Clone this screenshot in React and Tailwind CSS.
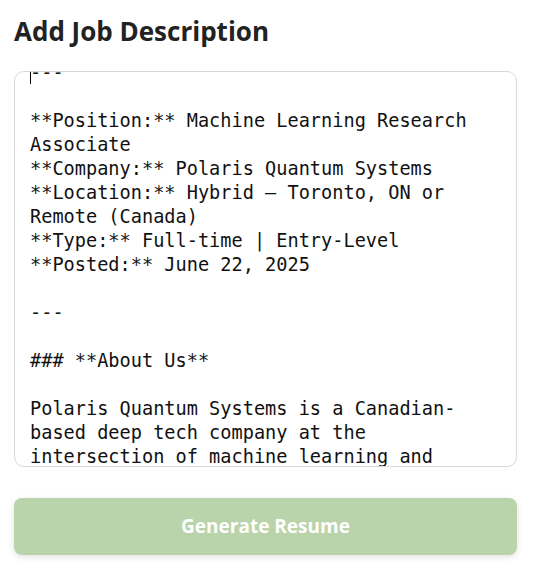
import React from "react";

const jobText = `---

**Position:** Machine Learning Research Associate
**Company:** Polaris Quantum Systems
**Location:** Hybrid – Toronto, ON or Remote (Canada)
**Type:** Full-time | Entry-Level
**Posted:** June 22, 2025

---

### **About Us**

Polaris Quantum Systems is a Canadian-based deep tech company at the intersection of machine learning and quantum computing.`;

export default function App() {
  return (
    <div className="w-[533px] h-[573px] bg-white pl-[14px] pr-[16px] pt-[14px] font-['Open_Sans',sans-serif]">
      <h2 className="text-[26px] leading-[34px] font-bold text-[#222]">Add Job Description</h2>

      {/* textarea look-alike, scrolled a little past the top */}
      <div className="mt-[23px] h-[396px] rounded-[10px] border border-[#d9d9d9] overflow-hidden px-[15px]">
        <div className="relative -mt-[11px] whitespace-pre-wrap break-words font-['DejaVu_Sans_Mono',monospace] text-[18.6px] leading-[24px] text-[#111]">
          <span className="absolute left-0 top-[9px] h-[14px] w-px bg-black" />
          {jobText}
        </div>
      </div>

      <button
        disabled
        className="mt-[31px] w-full h-[57px] rounded-[8px] bg-[#b9d4ab] shadow-[0_2px_6px_rgba(0,0,0,0.12)] text-white text-[19px] font-bold"
      >
        Generate Resume
      </button>
    </div>
  );
}
